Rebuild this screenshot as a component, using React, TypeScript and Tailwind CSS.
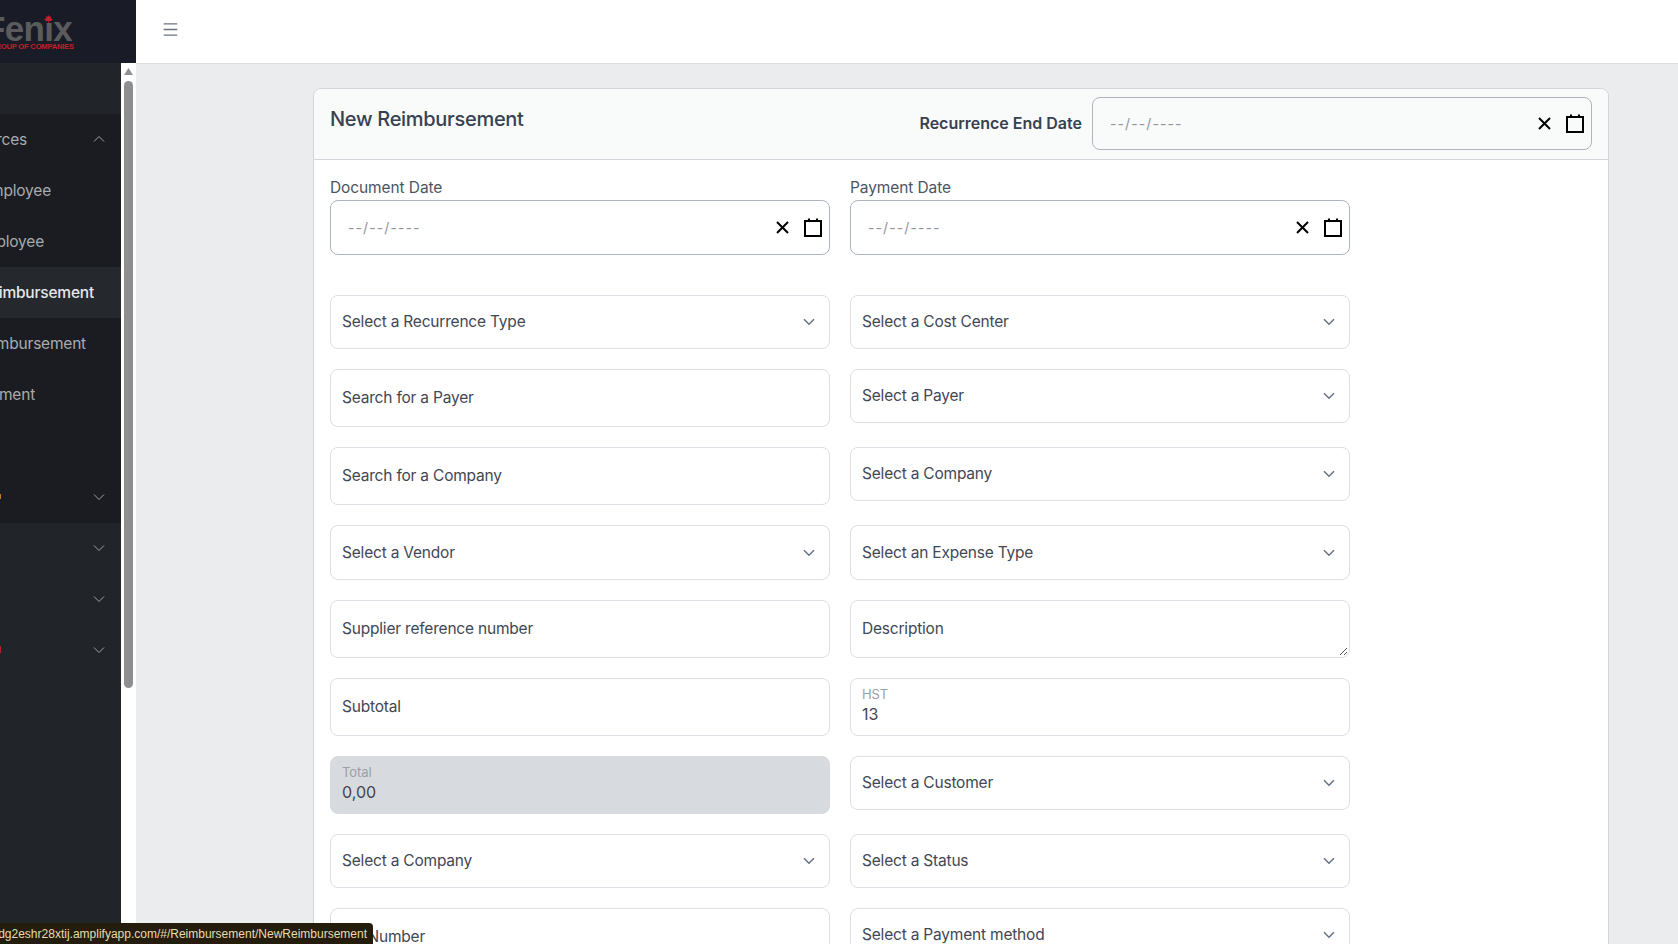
import { Menu } from 'lucide-react';

const FONT = "font-['Inter','Noto_Sans',sans-serif]";

const navItems = [
  { label: 'Human Resources', clip: 'w-[27px]', chevron: 'up' },
  { label: 'New Employee', clip: 'w-[51px]' },
  { label: 'List Employee', clip: 'w-[44px]' },
  { label: 'New Reimbursement', clip: 'w-[94px]', active: true },
  { label: 'List Reimbursement', clip: 'w-[86px]' },
  { label: 'Payment', clip: 'w-[35px]' },
];

function Chevron({ up = false }: { up?: boolean }) {
  return (
    <svg width="12" height="8" viewBox="0 0 12 8" fill="none" stroke="#9aa3a6" strokeWidth="1" className={up ? 'rotate-180' : ''}>
      <path d="M1 1.5 L6 6.5 L11 1.5" />
    </svg>
  );
}

function Sidebar() {
  return (
    <aside className="w-[136px] h-full shrink-0 flex flex-col bg-white overflow-hidden">
      <div className="h-[63px] shrink-0 bg-[#191c26] flex flex-col items-start">
        <div className="w-[72px] h-[30px] mt-[12px] overflow-hidden flex justify-end relative">
          <span className="font-['Liberation_Sans',sans-serif] font-bold text-[35px] leading-[38px] tracking-[-0.7px] text-[#5b5b5d] -mt-[2px] whitespace-nowrap">Fenix</span>
          <div className="absolute left-[43px] top-[3px] w-[11px] h-[8px] bg-[#191c26] flex justify-center items-end">
            <svg width="9" height="8" viewBox="0 0 10 9">
              <path d="M5 0 L6 2 L8 1.5 L7.5 4 L10 4.5 L7.5 7 L5.4 6.6 L5.4 9 L4.6 9 L4.6 6.6 L2.5 7 L0 4.5 L2.5 4 L2 1.5 L4 2 Z" fill="#c8202a" />
            </svg>
          </div>
        </div>
        <div className="w-[74px] overflow-hidden flex justify-end">
          <span className="font-['Liberation_Sans',sans-serif] font-bold text-[7.6px] leading-[10px] text-[#c11f27] whitespace-nowrap">GROUP OF COMPANIES</span>
        </div>
      </div>
      <div className="flex-1 flex min-h-0">
        <nav className={`w-[121px] h-full bg-[#1a1c21] flex flex-col ${FONT}`}>
          <div className="h-[51px] shrink-0 bg-[#212429]" />
          {navItems.map((item) => (
            <div
              key={item.label}
              className={`h-[51px] shrink-0 flex items-center justify-between pr-[16px] pb-[2px] text-[15.5px] tracking-[-0.2px] ${item.active ? 'bg-[#25282c] text-[#e6e8ea] font-medium' : 'text-[#a7abb0]'}`}
            >
              <span className={`${item.clip} mt-[2px] overflow-hidden flex justify-end whitespace-nowrap`}>
                <span className="shrink-0">{item.label}</span>
              </span>
              {item.chevron && <Chevron up />}
            </div>
          ))}
          <div className="h-[52px] shrink-0" />
          <div className="h-[51px] shrink-0 flex items-center justify-between pr-[16px] pb-[2px]">
            <span className="w-px h-[5px] bg-[#c77a20]" />
            <Chevron />
          </div>
          <div className="flex-1 bg-[#212429] flex flex-col">
            <div className="h-[51px] flex items-center justify-end pr-[16px] pb-[2px]"><Chevron /></div>
            <div className="h-[51px] flex items-center justify-end pr-[16px] pb-[2px]"><Chevron /></div>
            <div className="h-[51px] flex items-center justify-between pr-[16px] pb-[2px]">
              <span className="w-px h-[7px] bg-[#b3202a]" />
              <Chevron />
            </div>
          </div>
        </nav>
        <div className="w-[15px] h-full bg-white flex flex-col items-center pt-[5px]">
          <svg width="9" height="7" viewBox="0 0 9 7"><path d="M4.5 0 L9 7 L0 7 Z" fill="#8f8f8f" /></svg>
          <div className="w-[9px] h-[607px] mt-[6px] rounded-full bg-[#8f8f8f]" />
        </div>
      </div>
    </aside>
  );
}

function DateBox({ className = 'h-[55px]' }: { className?: string }) {
  return (
    <div className={`${className} border border-[#afb5bf] rounded-lg flex items-center pl-[17px] pr-[7px]`}>
      <span className="flex-1 text-[14px] tracking-[1.1px] text-[#8f949c]">--/--/----</span>
      <svg width="13" height="13" viewBox="0 0 13 13" fill="none" stroke="#000" strokeWidth="2" className="mr-[15px]">
        <path d="M1 1 L12 12 M12 1 L1 12" />
      </svg>
      <svg width="18" height="19" viewBox="0 0 18 19" fill="none" stroke="#000" strokeWidth="2">
        <path d="M1 3 H17 V18 H1 Z M5 0.5 V3 M13 0.5 V3" />
      </svg>
    </div>
  );
}

function SelectBox({ label, className = 'h-[54px]' }: { label: string; className?: string }) {
  return (
    <div className={`${className} border border-[#dcdfe3] rounded-lg bg-white flex items-center justify-between pl-[11px] pr-[14px] text-[#3f4754]`}>
      <span>{label}</span>
      <svg width="12" height="8" viewBox="0 0 12 8" fill="none" stroke="#667085" strokeWidth="1.5">
        <path d="M1 1.2 L6 6.2 L11 1.2" />
      </svg>
    </div>
  );
}

function InputBox({ label }: { label: string }) {
  return (
    <div className="h-[58px] border border-[#dcdfe3] rounded-lg bg-white flex items-center pl-[11px] text-[#3f4754]">
      {label}
    </div>
  );
}

function FloatBox({ label, value, disabled = false }: { label: string; value: string; disabled?: boolean }) {
  return (
    <div className={`h-[58px] rounded-lg border flex flex-col pt-[7px] pl-[11px] ${disabled ? 'bg-[#d7dade] border-[#d7dade]' : 'border-[#dcdfe3] bg-white'}`}>
      <span className="text-[13px] tracking-[-0.1px] leading-[16px] text-[#9aa0a8]">{label}</span>
      <span className="text-[16px] tracking-normal leading-[24px] text-[#3f4754]">{value}</span>
    </div>
  );
}

export default function App() {
  return (
    <div className={`h-screen w-full overflow-hidden flex bg-[#ebecee] relative text-[15.5px] tracking-[-0.2px] ${FONT}`}>
      <Sidebar />
      <div className="flex-1 min-w-0 flex flex-col">
        <header className="h-[64px] shrink-0 bg-white border-b border-[#dcdddf] flex items-center pl-[25px]">
          <Menu size={19} strokeWidth={1.6} className="text-[#6b7280] -mt-[5px]" />
        </header>
        <main className="flex-1 min-h-0 overflow-hidden pt-[24px] pl-[177px] pr-[69px]">
          <div className="border border-[#d3d6da] rounded-lg bg-white">
            <div className="h-[71px] bg-[#f9fafa] border-b border-[#d3d6da] rounded-t-lg flex px-[16px]">
              <h1 className="flex-1 text-[20px] tracking-[-0.3px] font-medium text-[#374151] leading-[28px] mt-[16px]">New Reimbursement</h1>
              <div className="h-[53px] mt-[8px] flex items-center gap-[10px]">
                <span className="text-[16px] tracking-normal font-semibold text-[#374151] mb-[1px]">Recurrence End Date</span>
                <div className="w-[500px]">
                  <DateBox className="h-[53px]" />
                </div>
              </div>
            </div>
            <div className="px-[16px] pt-[17px]">
              <div className="grid grid-cols-[500px_500px] gap-x-[20px]">
                <div>
                  <div className="h-[23px] text-[#4b5563] leading-[22px] tracking-[-0.1px]">Document Date</div>
                  <DateBox />
                </div>
                <div>
                  <div className="h-[23px] text-[#4b5563] leading-[22px] tracking-[-0.1px]">Payment Date</div>
                  <DateBox />
                </div>
              </div>
              <div className="grid grid-cols-[500px_500px] gap-x-[20px] gap-y-[20px] items-start mt-[40px]">
                <SelectBox label="Select a Recurrence Type" />
                <SelectBox label="Select a Cost Center" />
                <InputBox label="Search for a Payer" />
                <SelectBox label="Select a Payer" />
                <InputBox label="Search for a Company" />
                <SelectBox label="Select a Company" />
                <SelectBox label="Select a Vendor" className="h-[55px]" />
                <SelectBox label="Select an Expense Type" className="h-[55px]" />
                <InputBox label="Supplier reference number" />
                <div className="h-[58px] border border-[#dcdfe3] rounded-lg bg-white flex items-center pl-[11px] text-[#3f4754] relative">
                  Description
                  <svg width="9" height="9" viewBox="0 0 9 9" stroke="#555" strokeWidth="1" className="absolute right-[1px] bottom-[1px]">
                    <path d="M1 8 L8 1 M5 8 L8 5" />
                  </svg>
                </div>
                <InputBox label="Subtotal" />
                <FloatBox label="HST" value="13" />
                <FloatBox label="Total" value="0,00" disabled />
                <SelectBox label="Select a Customer" />
                <SelectBox label="Select a Company" />
                <SelectBox label="Select a Status" />
                <InputBox label="PO Number" />
                <SelectBox label="Select a Payment method" />
              </div>
            </div>
          </div>
        </main>
      </div>
      <div className="absolute left-0 bottom-0 h-[21px] w-[373px] bg-[#241c0c] rounded-tr-[4px] overflow-hidden flex justify-end items-center pr-[6px] pt-[1px] font-['Liberation_Sans',sans-serif] text-[12px] tracking-normal text-[#e6dcae] whitespace-nowrap">
        <span className="shrink-0">https://main.dg2eshr28xtij.amplifyapp.com/#/Reimbursement/NewReimbursement</span>
      </div>
    </div>
  );
}
